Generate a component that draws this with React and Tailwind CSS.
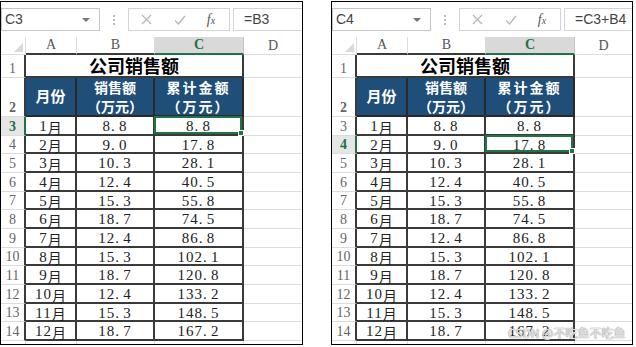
import React from "react";

const rows = [
  ["1", "8.8", "8.8"],
  ["2", "9.0", "17.8"],
  ["3", "10.3", "28.1"],
  ["4", "12.4", "40.5"],
  ["5", "15.3", "55.8"],
  ["6", "18.7", "74.5"],
  ["7", "12.4", "86.8"],
  ["8", "15.3", "102.1"],
  ["9", "18.7", "120.8"],
  ["10", "12.4", "133.2"],
  ["11", "15.3", "148.5"],
  ["12", "18.7", "167.2"],
];

// row heights alternate so 12 rows fill 224px
const heights = ["h-[19px]", "h-[18px]", "h-[19px]", "h-[19px]", "h-[18px]", "h-[19px]", "h-[19px]", "h-[18px]", "h-[19px]", "h-[19px]", "h-[18px]", "h-[19px]"];

const serif = "font-['Liberation_Serif','Noto_Sans_CJK_SC',serif]";
const cjk = "font-['Noto_Sans_CJK_SC','Liberation_Sans',sans-serif]";

// SimSun-like number: the dot takes a full half-width cell
function Num({ v }) {
  const [a, b] = v.split(".");
  return (
    <span className="tracking-[1px]">
      {a}
      <span className="inline-block w-[8px]">.</span>
      {b}
    </span>
  );
}

function RowHead({ n, sel, table }) {
  return (
    <div
      className={`w-[25px] shrink-0 flex items-end justify-center pb-[1px] text-[14px] leading-none ${serif} border-b border-b-[#dcdcdc] ${
        sel ? "bg-[#e6e6e6] text-[#217346] font-bold border-r-2 border-r-[#217346]" : table ? "text-[#666] border-r-2 border-r-[#3a3a3a]" : "text-[#666] border-r border-r-[#dcdcdc]"
      }`}
    >
      {n}
    </div>
  );
}

function Selection() {
  return (
    <div className="absolute -top-[1px] -left-[1px] right-0 bottom-0 border-2 border-[#217346] pointer-events-none">
      <div className="absolute -right-[4px] -bottom-[4px] w-[6px] h-[6px] bg-[#217346] border border-white" />
    </div>
  );
}

function Sheet({ name, formula, sel, width, children }) {
  return (
    <div className={`relative ${width} h-[344px] shrink-0 border border-black bg-white flex flex-col overflow-hidden`}>
      {/* formula bar */}
      <div className="h-[35px] shrink-0 flex items-start pt-[6px] font-['Liberation_Sans',sans-serif] text-[14px] text-[#444]">
        <div className="w-[99px] h-[23px] shrink-0 border border-[#c6c6c6] flex items-center justify-between pl-[3px] pr-[9px]">
          <span>{name}</span>
          <span className="w-0 h-0 border-x-[4px] border-x-transparent border-t-[4px] border-t-[#777]" />
        </div>
        <div className="w-[28px] h-[23px] shrink-0 flex flex-col items-center justify-center gap-[2px]">
          <span className="w-[2px] h-[2px] bg-[#bbb]" />
          <span className="w-[2px] h-[2px] bg-[#bbb]" />
          <span className="w-[2px] h-[2px] bg-[#bbb]" />
        </div>
        <div className="w-[102px] h-[23px] shrink-0 border border-[#d4d4d4] flex items-center">
          <div className="w-[34px] flex justify-center">
            <svg width="11" height="11" viewBox="0 0 11 11" stroke="#b5b5b5" strokeWidth="1.2">
              <path d="M1 1 L10 10 M10 1 L1 10" />
            </svg>
          </div>
          <div className="w-[34px] flex justify-center">
            <svg width="12" height="10" viewBox="0 0 12 10" fill="none" stroke="#b5b5b5" strokeWidth="1.3">
              <path d="M1 5.5 L4.5 9 L11 1" />
            </svg>
          </div>
          <div className="w-[28px] text-center font-['Liberation_Serif',serif] italic text-[14px] text-[#555]">
            <span>f</span>
            <span className="text-[10px]">x</span>
          </div>
        </div>
        <div className="flex-1 ml-[3px] h-[23px] border border-[#d4d4d4] border-r-0 flex items-center pl-[10px]">{formula}</div>
      </div>

      {/* column headers */}
      <div className={`h-[18px] shrink-0 flex text-[14px] text-[#555] ${serif} leading-none`}>
        <div className="w-[25px] shrink-0 border-r border-b border-[#dcdcdc] flex items-end justify-end p-[2px]">
          <span className="w-0 h-0 border-l-[9px] border-l-transparent border-b-[9px] border-b-[#d9d9d9]" />
        </div>
        <div className="w-[51px] shrink-0 border-r border-[#dcdcdc] border-b-2 border-b-[#3a3a3a] flex items-center justify-center">A</div>
        <div className="w-[78px] shrink-0 border-r border-[#dcdcdc] border-b-2 border-b-[#3a3a3a] flex items-center justify-center">B</div>
        <div className="w-[89px] shrink-0 bg-[#d9d9d9] border-r border-[#c6c6c6] border-b-2 border-b-[#217346] flex items-center justify-center text-[#217346] font-bold">C</div>
        <div className="flex-1 border-b border-[#dcdcdc] flex items-center justify-center">D</div>
      </div>

      {/* row 1: title */}
      <div className="h-[23px] shrink-0 flex">
        <RowHead n="1" table />
        <div className={`w-[218px] shrink-0 border-r-2 border-b-2 border-[#3a3a3a] flex items-end justify-center pb-[1px] text-[18px] leading-[20px] font-bold text-black ${cjk}`}>
          公司销售额
        </div>
        <div className="flex-1 border-b border-[#dcdcdc]" />
      </div>

      {/* row 2: headers */}
      <div className={`h-[39px] shrink-0 flex text-white font-bold ${cjk}`}>
        <RowHead n="2" table />
        <div className="w-[51px] shrink-0 bg-[#1f4e79] border-r-2 border-b-2 border-[#2a2a2a] flex items-center justify-center text-[15px]">月份</div>
        <div className="w-[78px] shrink-0 bg-[#1f4e79] border-r-2 border-b-2 border-[#2a2a2a] flex flex-col items-center justify-center text-[14px] leading-[19px]">
          <span>销售额</span>
          <span>（万元）</span>
        </div>
        <div className="w-[89px] shrink-0 bg-[#1f4e79] border-r-2 border-b-2 border-[#2a2a2a] flex flex-col items-center justify-center text-[14px] leading-[19px] tracking-[2px]">
          <span>累计金额</span>
          <span>（万元）</span>
        </div>
        <div className="flex-1 border-b border-[#dcdcdc]" />
      </div>

      {/* data rows */}
      {rows.map((r, i) => {
        const n = i + 3;
        return (
          <div key={n} className={`${heights[i]} shrink-0 flex text-[15px] text-[#222] ${serif}`}>
            <RowHead n={n} table sel={n === sel} />
            <div className="w-[51px] shrink-0 border-r-2 border-b-2 border-[#3a3a3a] flex items-center justify-center pt-[2px] leading-none">
              <span className="tracking-[1px]">{r[0]}</span>
              <span className={`${cjk} text-[14px]`}>月</span>
            </div>
            <div className="w-[78px] shrink-0 border-r-2 border-b-2 border-[#3a3a3a] flex items-center justify-center pt-[2px] leading-none">
              <Num v={r[1]} />
            </div>
            <div className="relative w-[89px] shrink-0 border-r-2 border-b-2 border-[#3a3a3a] flex items-center justify-center pt-[2px] leading-none">
              <Num v={r[2]} />
              {n === sel && <Selection />}
            </div>
            <div className="flex-1 border-b border-[#dcdcdc]" />
          </div>
        );
      })}

      {/* row 15, cut off */}
      <div className="flex-1 flex">
        <div className="w-[25px] shrink-0 border-r border-[#dcdcdc]" />
        <div className="w-[51px] shrink-0 border-r border-[#dcdcdc]" />
        <div className="w-[78px] shrink-0 border-r border-[#dcdcdc]" />
        <div className="w-[89px] shrink-0 border-r border-[#dcdcdc]" />
        <div className="flex-1" />
      </div>
      {children}
    </div>
  );
}

export default function App() {
  return (
    <div className="w-[636px] h-[347px] bg-white pt-[1px] flex gap-[28px]">
      <Sheet name="C3" formula="=B3" sel={3} width="w-[303px]" />
      <Sheet name="C4" formula="=C3+B4" sel={4} width="w-[302px]">
        <div className={`absolute left-[176px] top-[325px] text-[12px] leading-none text-white/80 [text-shadow:0_0_1px_#888,0_0_1px_#888] pointer-events-none whitespace-nowrap ${cjk}`}>
          CSDN @不吃鱼不吃鱼
        </div>
      </Sheet>
    </div>
  );
}
